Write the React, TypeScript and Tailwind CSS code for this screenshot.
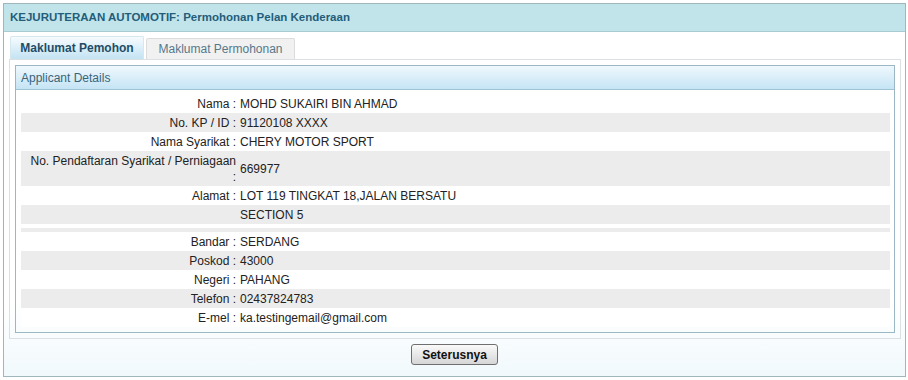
import React from "react"

type Row = { label?: string; value?: string; gray?: boolean; tall?: boolean; h?: string }

const rows: Row[] = [
  { label: "Nama", value: "MOHD SUKAIRI BIN AHMAD" },
  { label: "No. KP / ID", value: "91120108 XXXX", gray: true },
  { label: "Nama Syarikat", value: "CHERY MOTOR SPORT" },
  { label: "No. Pendaftaran Syarikat / Perniagaan", value: "669977", gray: true, tall: true },
  { label: "Alamat", value: "LOT 119 TINGKAT 18,JALAN BERSATU" },
  { value: "SECTION 5", gray: true },
  { h: "h-[4px]" },
  { h: "h-[4px]", gray: true },
  { label: "Bandar", value: "SERDANG" },
  { label: "Poskod", value: "43000", gray: true },
  { label: "Negeri", value: "PAHANG" },
  { label: "Telefon", value: "02437824783", gray: true },
  { label: "E-mel", value: "ka.testingemail@gmail.com" },
]

function DetailRow({ row }: { row: Row }) {
  const bg = row.gray ? "bg-[#ececec]" : "bg-white"
  if (row.h) return <div className={`${row.h} ${bg}`} />
  return (
    <div className={`flex items-center ${row.tall ? "h-[35px]" : "h-[19px]"} ${bg}`}>
      <div className="w-[216px] shrink-0 text-right leading-[16px] pr-[1px]">
        {row.tall ? (
          <>
            {row.label}
            <br />:
          </>
        ) : row.label ? (
          `${row.label} :`
        ) : null}
      </div>
      <div className="pl-[3px]">{row.value}</div>
    </div>
  )
}

export default function App() {
  return (
    <div
      className="w-[908px] h-[380px] bg-white p-[3px] text-[12px] text-[#222]"
      style={{ fontFamily: '"Liberation Sans", Arial, sans-serif' }}
    >
      <div className="h-[374px] w-[903px] border border-[#9fb6bd] flex flex-col bg-gradient-to-b from-white from-80% to-[#f1f9fc]">
        {/* Header */}
        <div className="h-[28px] bg-[#c1e4eb] border-b border-[#aacbd3] px-[6px] flex items-center font-bold text-[11.5px] text-[#245d7a]">
          KEJURUTERAAN AUTOMOTIF: Permohonan Pelan Kenderaan
        </div>

        <div className="pt-[4px] pl-[5px] pr-[4px]">
          {/* Tabs */}
          <div className="flex items-end h-[23px] gap-[2px] pl-[1px]">
            <div className="w-[134px] h-[23px] flex items-center justify-center font-bold text-[#1f4d66] border-t border-l border-r border-[#d6e8ef] rounded-t-[2px] bg-gradient-to-b from-[#f6fbfe] to-[#c3e3f3]">
              Maklumat Pemohon
            </div>
            <div className="w-[149px] h-[21px] flex items-center justify-center text-[#56788b] border-t border-l border-r border-[#dcdcdc] rounded-t-[2px] bg-[#f1f1f1]">
              Maklumat Permohonan
            </div>
          </div>

          {/* Tab panel */}
          <div className="border border-[#dbe0e2] h-[280px] px-[5px] pt-[5px]">
            <div className="border border-[#9ab7c3] h-[268px] flex flex-col">
              <div className="h-[24px] border-b border-[#9fc3d2] bg-gradient-to-b from-[#eff8fd] to-[#c5e4f5] flex items-center px-[5px] text-[#3a6479]">
                Applicant Details
              </div>
              <div className="pt-[4px] pl-[5px] pr-[4px]">
                {rows.map((r, i) => (
                  <DetailRow key={i} row={r} />
                ))}
              </div>
            </div>
          </div>
        </div>

        {/* Footer */}
        <div className="flex justify-center pt-[5px]">
          <button className="w-[87px] h-[21px] border border-[#6f6f6f] rounded-[3px] bg-gradient-to-b from-[#fafafa] to-[#d6d6d6] font-bold text-[12px] text-[#111] leading-none">
            Seterusnya
          </button>
        </div>
      </div>
    </div>
  )
}
